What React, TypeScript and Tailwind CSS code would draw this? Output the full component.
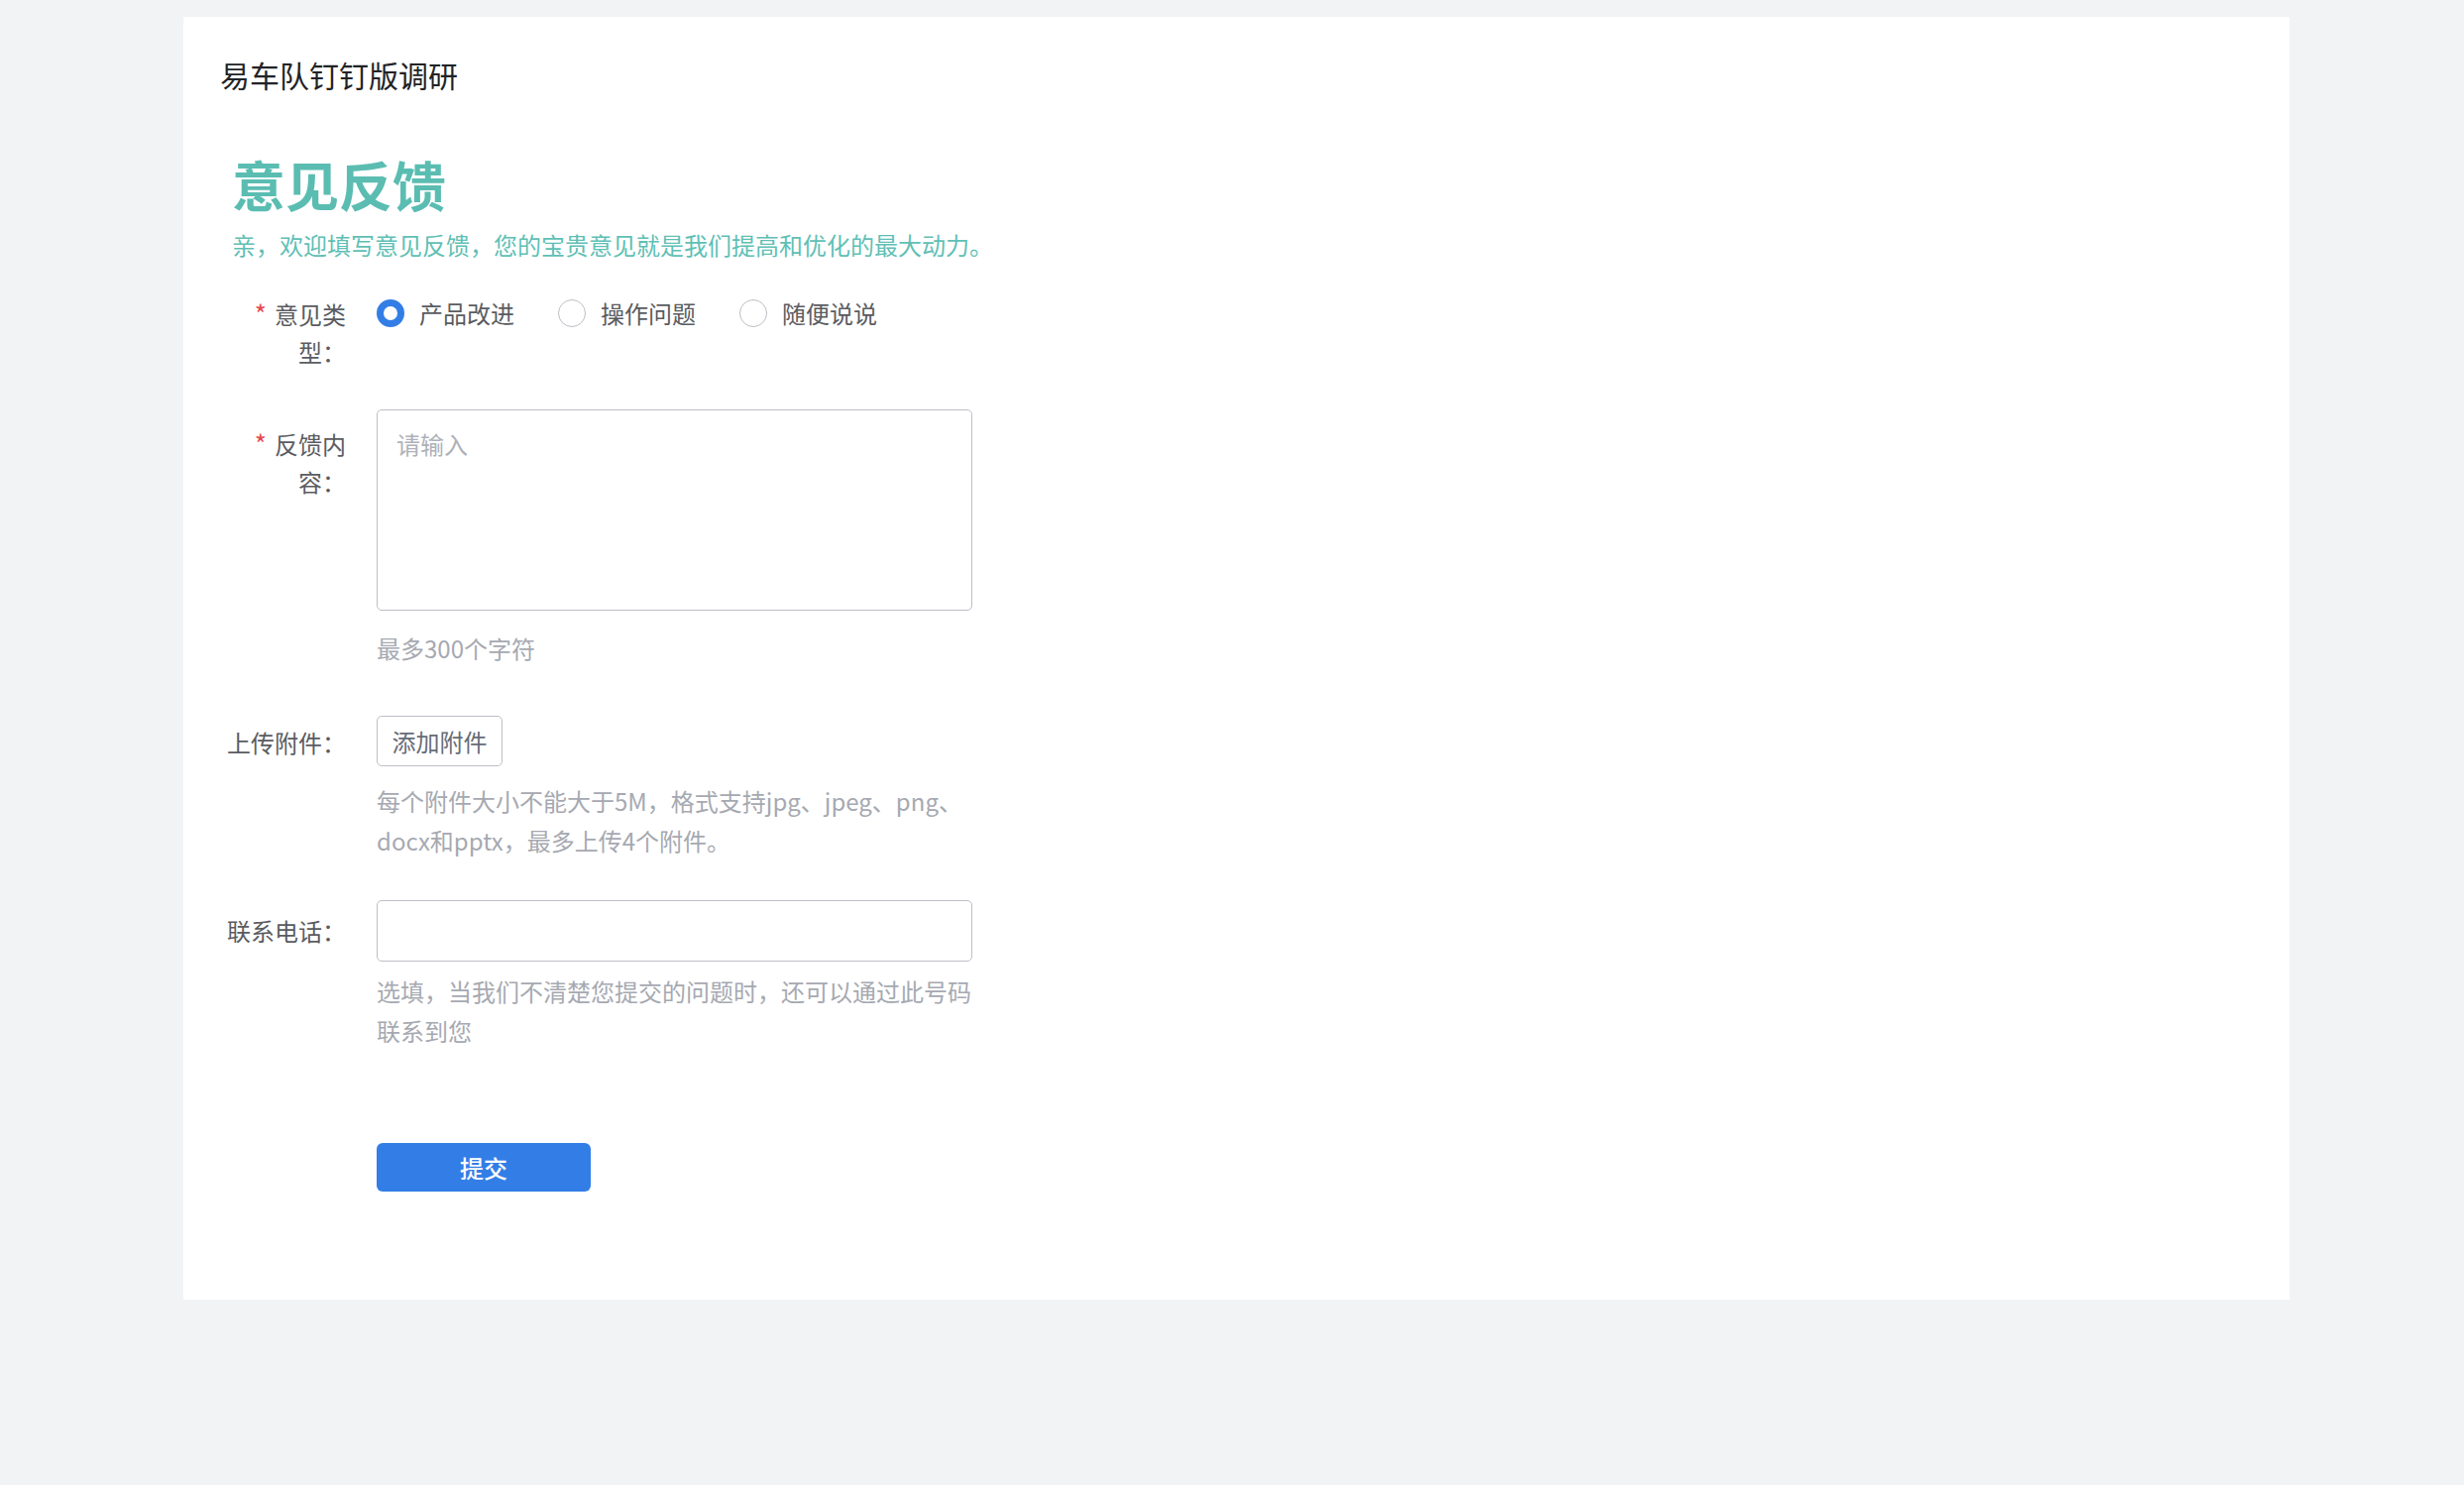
import { useState } from "react";

// ─── Options ────────────────────────────────────────────

const TYPES = ["产品改进", "操作问题", "随便说说"];

const FONT = { fontFamily: '"Noto Sans CJK SC", "Noto Sans", sans-serif' };

// ─── Form row ───────────────────────────────────────────

function Row({
  label,
  required,
  labelPad,
  className,
  children,
}: {
  label: string;
  required?: boolean;
  labelPad: string;
  className?: string;
  children: React.ReactNode;
}) {
  return (
    <div className={`flex ${className ?? ""}`}>
      <div className={`w-[124px] shrink-0 text-right text-[24px] leading-[38px] text-[#5a5c61] ${labelPad}`}>
        {required && <span className="mr-[8px] text-[26px] text-[#e5484d]">*</span>}
        {label}
      </div>
      <div className="ml-[31px] flex flex-col">{children}</div>
    </div>
  );
}

// ─── Radio ──────────────────────────────────────────────

function Radio({ checked, label, onClick }: { checked: boolean; label: string; onClick: () => void }) {
  return (
    <button type="button" onClick={onClick} className="mr-[44px] flex items-center">
      <span
        className={`box-border h-[28px] w-[28px] rounded-full bg-white ${
          checked ? "border-[7px] border-[#337ee6]" : "border-[1.5px] border-[#bcbfc6]"
        }`}
      />
      <span className="ml-[15px] text-[24px] leading-[38px] text-[#5a5c61]">{label}</span>
    </button>
  );
}

// ─── Page ───────────────────────────────────────────────

export default function App() {
  const [type, setType] = useState(0);

  return (
    <div className="min-h-screen bg-[#f2f3f5] pt-[17px]" style={FONT}>
      <div className="ml-[185px] h-[1294px] w-[2125px] bg-white px-[37px] pt-[38px]">
        <h1 className="text-[30px] leading-[40px] text-[#222326]">易车队钉钉版调研</h1>

        <h2 className="ml-[12px] mt-[59px] text-[54px] font-bold leading-[64px] text-[#5bbdb2]">意见反馈</h2>
        <p className="ml-[12px] mt-[12px] text-[24px] leading-[34px] text-[#5fbfb5]">
          亲，欢迎填写意见反馈，您的宝贵意见就是我们提高和优化的最大动力。
        </p>

        <div className="ml-[3px] mt-[33px]">
          <Row label="意见类型：" required labelPad="pt-0">
            <div className="flex items-center">
              {TYPES.map((t, i) => (
                <Radio key={t} label={t} checked={type === i} onClick={() => setType(i)} />
              ))}
            </div>
          </Row>

          <Row label="反馈内容：" required labelPad="pt-[15px]" className="mt-[39px]">
            <textarea
              placeholder="请输入"
              className="box-border h-[203px] w-[601px] resize-none rounded-[5px] border-[1.5px] border-[#bcbfc6] px-[19px] py-[15px] text-[24px] leading-[38px] text-[#333] outline-none placeholder:text-[#aeb1b8]"
            />
            <div className="mt-[18px] text-[24px] leading-[40px] text-[#a6a9b1]">最多300个字符</div>
          </Row>

          <Row label="上传附件：" labelPad="pt-[8px]" className="mt-[48px]">
            <button
              type="button"
              className="box-border h-[51px] w-[127px] rounded-[5px] border-[1.5px] border-[#bcbfc6] text-[24px] text-[#676c77]"
            >
              添加附件
            </button>
            <div className="mt-[15px] w-[601px] text-[24px] leading-[40px] text-[#a6a9b1]">
              每个附件大小不能大于5M，格式支持jpg、jpeg、png、docx和pptx，最多上传4个附件。
            </div>
          </Row>

          <Row label="联系电话：" labelPad="pt-[12px]" className="mt-[40px]">
            <input
              type="text"
              className="box-border h-[62px] w-[601px] rounded-[5px] border-[1.5px] border-[#bcbfc6] px-[19px] text-[24px] text-[#333] outline-none"
            />
            <div className="mt-[10px] w-[601px] text-[24px] leading-[40px] text-[#a6a9b1]">
              选填，当我们不清楚您提交的问题时，还可以通过此号码联系到您
            </div>
          </Row>

          <div className="ml-[155px] mt-[93px]">
            <button
              type="button"
              className="h-[49px] w-[216px] rounded-[6px] bg-[#337ee6] text-[24px] font-medium text-white"
            >
              提交
            </button>
          </div>
        </div>
      </div>
    </div>
  );
}
